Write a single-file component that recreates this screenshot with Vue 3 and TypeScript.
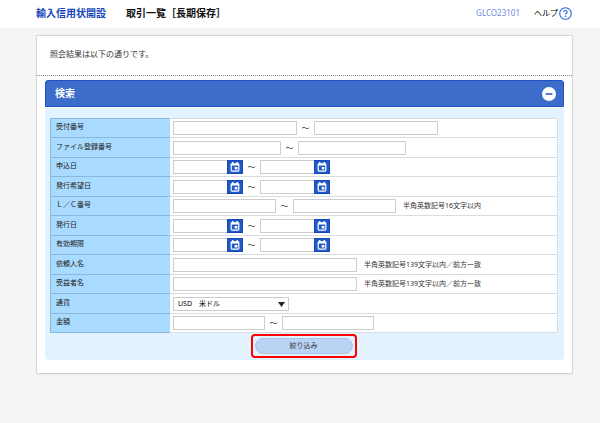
<script setup lang="ts">
import { ref } from 'vue'

type Kind = 'range' | 'date' | 'text' | 'select'

interface Field {
  id: string
  label: string
  kind: Kind
  size?: string
  note?: string
}

const fields: Field[] = [
  { id: 'receipt', label: '受付番号', kind: 'range', size: 'w-xl' },
  { id: 'file', label: 'ファイル登録番号', kind: 'range', size: 'w-lg' },
  { id: 'apply', label: '申込日', kind: 'date' },
  { id: 'desired', label: '発行希望日', kind: 'date' },
  { id: 'lc', label: 'Ｌ／Ｃ番号', kind: 'range', size: 'w-md', note: '半角英数記号16文字以内' },
  { id: 'issue', label: '発行日', kind: 'date' },
  { id: 'expiry', label: '有効期限', kind: 'date' },
  { id: 'applicant', label: '依頼人名', kind: 'text', note: '半角英数記号139文字以内／前方一致' },
  { id: 'beneficiary', label: '受益者名', kind: 'text', note: '半角英数記号139文字以内／前方一致' },
  { id: 'currency', label: '通貨', kind: 'select' },
  { id: 'amount', label: '金額', kind: 'range', size: 'w-sm' },
]

const open = ref(true)
const currency = ref('USD')
</script>

<template>
  <div class="page">
    <header class="topbar">
      <h1 class="category">輸入信用状開設</h1>
      <h2 class="title">取引一覧［長期保存］</h2>
      <span class="code">GLCO23101</span>
      <a href="#" class="help">
        ヘルプ
        <svg class="help-icon" viewBox="0 0 13 13">
          <circle cx="6.5" cy="6.5" r="5.8" fill="#fff" stroke="#2a63d4" stroke-width="1.1" />
          <path d="M4.8 5.2C4.8 4.1 5.5 3.5 6.5 3.5s1.7.6 1.7 1.5c0 1.3-1.6 1.3-1.6 2.6" fill="none" stroke="#2a63d4" stroke-width="1.1" />
          <circle cx="6.6" cy="9.3" r=".7" fill="#2a63d4" />
        </svg>
      </a>
    </header>

    <main class="card">
      <p class="message">照会結果は以下の通りです。</p>
      <section class="search">
        <div class="bar">
          <h3 id="search-title" class="bar-title">検索</h3>
          <button type="button" class="toggle" aria-labelledby="search-title" :aria-expanded="open" @click="open = !open">
            <svg class="toggle-icon" viewBox="0 0 14 14">
              <circle cx="7" cy="7" r="7" fill="#fff" />
              <path d="M3.6 7h6.8" stroke="#1d51c0" stroke-width="1.5" />
            </svg>
          </button>
        </div>
        <form v-if="open" class="panel" @submit.prevent>
          <table class="grid">
            <tbody>
              <tr v-for="f in fields" :key="f.id">
                <th scope="row"><label :id="f.id + '-label'" :for="f.id">{{ f.label }}</label></th>
                <td>
                  <div class="controls">
                    <template v-if="f.kind === 'range'">
                      <input :id="f.id" type="text" class="box" :class="f.size">
                      <span class="tilde">～</span>
                      <input :aria-labelledby="f.id + '-label'" type="text" class="box" :class="f.size">
                    </template>
                    <template v-else-if="f.kind === 'date'">
                      <template v-for="n in 2" :key="n">
                        <span v-if="n === 2" class="tilde">～</span>
                        <input :id="n === 1 ? f.id : f.id + '-to'" :aria-labelledby="f.id + '-label'" type="text" class="box w-date">
                        <button type="button" class="cal" :aria-labelledby="f.id + '-label'">
                          <svg class="cal-icon" viewBox="0 0 10 10">
                            <path d="M2.7 0v2M7.3 0v2" stroke="#fff" stroke-width="1.4" />
                            <rect x="1.2" y="1.8" width="7.6" height="7.3" rx=".8" fill="none" stroke="#fff" stroke-width="1.2" />
                            <path d="M1 2.6h8" stroke="#fff" stroke-width="1.9" />
                            <rect x="4.7" y="5" width="2.7" height="2.5" fill="#fff" />
                          </svg>
                        </button>
                      </template>
                    </template>
                    <input v-else-if="f.kind === 'text'" :id="f.id" type="text" class="box w-full">
                    <span v-else class="select-wrap">
                      <select :id="f.id" v-model="currency" class="box select">
                        <option value="USD">USD　米ドル</option>
                      </select>
                      <svg class="arrow" viewBox="0 0 7 5"><path d="M0 0h7L3.5 5z" fill="#222" /></svg>
                    </span>
                    <span v-if="f.note" class="note">{{ f.note }}</span>
                  </div>
                </td>
              </tr>
            </tbody>
          </table>
          <div class="actions">
            <div class="highlight">
              <button type="submit" class="submit">絞り込み</button>
            </div>
          </div>
        </form>
      </section>
    </main>
  </div>
</template>

<style>
body {
  margin: 0;
  background: #f4f4f4;
}
</style>

<style scoped>
* {
  box-sizing: border-box;
}

.page {
  padding-bottom: 24px;
  font-family: "Noto Sans", "Noto Sans CJK JP", sans-serif;
  font-size: 7px;
  line-height: 12px;
  color: #333;
}

.topbar {
  display: flex;
  align-items: center;
  height: 28px;
  padding: 0 28px 2px 36px;
  background: #fff;
}

.category,
.title {
  margin: 0;
  font-size: 10px;
  line-height: 16px;
  font-weight: 700;
}

.category {
  color: #1546b8;
}

.title {
  margin-left: 20px;
  color: #111;
}

.code {
  margin-left: auto;
  font-size: 8px;
  color: #6c8ce0;
}

.help {
  display: flex;
  align-items: center;
  gap: 1px;
  margin-left: 14px;
  font-size: 8px;
  color: #000;
  text-decoration: none;
}

.help-icon {
  width: 13px;
  height: 13px;
}

.card {
  margin: 8px 28px 0 37px;
  padding-bottom: 13px;
  background: #fff;
  border-radius: 1px;
  box-shadow: 0 0 1px 1px #d4d4d4, 0 1px 1px #bbb;
}

.message {
  margin: 0;
  padding: 12px 13px 15px;
  border-bottom: 1px dotted #888;
  font-size: 8px;
}

.search {
  margin: 4px 8px 0;
}

.bar {
  display: flex;
  align-items: center;
  justify-content: space-between;
  height: 27px;
  padding: 0 7px 2px 9px;
  background: #3c6dcb;
  border: 1px solid #1d51c0;
  border-radius: 3px 3px 0 0;
}

.bar-title {
  margin: 0;
  font-size: 10px;
  line-height: 14px;
  color: #fff;
}

.toggle {
  display: flex;
  margin-top: 2px;
  padding: 0;
  border: 0;
  background: none;
}

.toggle-icon {
  width: 14px;
  height: 14px;
}

.panel {
  margin-top: 1px;
  padding: 10px 6px 2px 5px;
  background: #e2f2ff;
  border-radius: 0 0 4px 4px;
}

.grid {
  width: 100%;
  border-collapse: collapse;
  table-layout: fixed;
  background: #fff;
}

.grid tr {
  height: 19px;
}

.grid tr:nth-child(even) {
  height: 20px;
}

.grid th {
  width: 119px;
  padding: 0 0 2px 5px;
  border: 1px solid #8ab8da;
  border-right-color: #a9daff;
  background: #a9daff;
  font-weight: 400;
  text-align: left;
  color: #222;
}

.grid label {
  display: block;
}

.grid td {
  padding: 0 0 0 3px;
  border: 1px solid #d9dde1;
  border-left: 0;
}

.controls {
  display: flex;
  align-items: center;
  height: 14px;
}

.box {
  height: 14px;
  margin: 0;
  padding: 0 4px;
  border: 1px solid #ccc;
  border-radius: 0;
  background: #fff;
  font: inherit;
  color: #000;
}

.w-xl { width: 124px; }
.w-lg { width: 108px; }
.w-md { width: 103px; }
.w-sm { width: 92px; }
.w-date { width: 54px; border-right: 0; }
.w-full { width: 184px; }

.tilde {
  width: 17px;
  font-size: 8px;
  text-align: center;
}

.cal {
  display: flex;
  align-items: center;
  justify-content: center;
  width: 16px;
  height: 14px;
  padding: 0;
  border: 1px solid #1748b4;
  background: #2259c8;
}

.cal-icon {
  width: 10px;
  height: 10px;
}

.select-wrap {
  position: relative;
  display: flex;
}

.select {
  width: 116px;
  appearance: none;
}

.arrow {
  position: absolute;
  top: 5px;
  right: 4px;
  width: 7px;
  height: 5px;
  pointer-events: none;
}

.note {
  margin-left: 7px;
}

.actions {
  display: flex;
  justify-content: center;
  margin-left: -1px;
}

.highlight {
  margin-top: 1px;
  padding: 2px;
  border: 2px solid #f00;
  border-radius: 4px;
}

.submit {
  display: block;
  width: 98px;
  height: 16px;
  padding: 0;
  border: 1px solid #a9c4ee;
  border-radius: 8px;
  background: #bad3f4;
  font: inherit;
  color: #333;
}
</style>
